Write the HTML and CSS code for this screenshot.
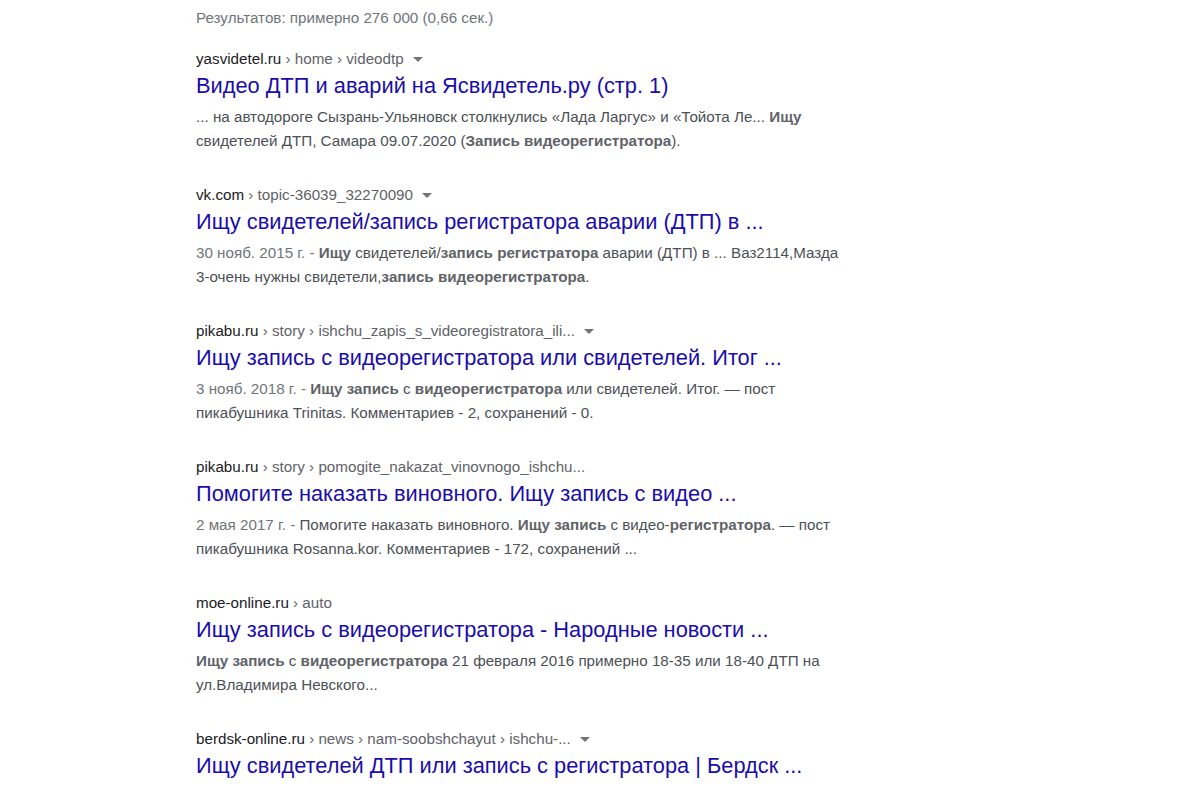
FILE: index.html
```html
<!DOCTYPE html>
<html lang="ru">
<head>
    <meta charset="UTF-8">
    <title>Ищу запись с видеорегистратора - Поиск</title>
    <link rel="stylesheet" href="styles.css">
</head>
<body>
    <div class="results">
        <div class="stats">Результатов: примерно 276 000 (0,66 сек.)</div>

        <div class="result">
            <div class="cite">yasvidetel.ru<span class="path"> › home › videodtp</span><span class="arrow"></span></div>
            <a class="title" href="#">Видео ДТП и аварий на Ясвидетель.ру (стр. 1)</a>
            <div class="snippet">... на автодороге Сызрань-Ульяновск столкнулись «Лада Ларгус» и «Тойота Ле... <b>Ищу</b> свидетелей ДТП, Самара 09.07.2020 (<b>Запись видеорегистратора</b>).</div>
        </div>

        <div class="result">
            <div class="cite">vk.com<span class="path"> › topic-36039_32270090</span><span class="arrow"></span></div>
            <a class="title" href="#">Ищу свидетелей/запись регистратора аварии (ДТП) в ...</a>
            <div class="snippet"><span class="date">30 нояб. 2015 г. - </span><b>Ищу</b> свидетелей/<b>запись регистратора</b> аварии (ДТП) в ... Ваз2114,Мазда 3-очень нужны свидетели,<b>запись видеорегистратора</b>.</div>
        </div>

        <div class="result">
            <div class="cite">pikabu.ru<span class="path"> › story › ishchu_zapis_s_videoregistratora_ili...</span><span class="arrow"></span></div>
            <a class="title" href="#">Ищу запись с видеорегистратора или свидетелей. Итог ...</a>
            <div class="snippet"><span class="date">3 нояб. 2018 г. - </span><b>Ищу запись</b> с <b>видеорегистратора</b> или свидетелей. Итог. — пост пикабушника Trinitas. Комментариев - 2, сохранений - 0.</div>
        </div>

        <div class="result">
            <div class="cite">pikabu.ru<span class="path"> › story › pomogite_nakazat_vinovnogo_ishchu...</span></div>
            <a class="title" href="#">Помогите наказать виновного. Ищу запись с видео ...</a>
            <div class="snippet"><span class="date">2 мая 2017 г. - </span>Помогите наказать виновного. <b>Ищу запись</b> с видео-<b>регистратора</b>. — пост пикабушника Rosanna.kor. Комментариев - 172, сохранений ...</div>
        </div>

        <div class="result">
            <div class="cite">moe-online.ru<span class="path"> › auto</span></div>
            <a class="title" href="#">Ищу запись с видеорегистратора - Народные новости ...</a>
            <div class="snippet"><b>Ищу запись</b> с <b>видеорегистратора</b> 21 февраля 2016 примерно 18-35 или 18-40 ДТП на ул.Владимира Невского...</div>
        </div>

        <div class="result">
            <div class="cite">berdsk-online.ru<span class="path"> › news › nam-soobshchayut › ishchu-...</span><span class="arrow"></span></div>
            <a class="title" href="#">Ищу свидетелей ДТП или запись с регистратора | Бердск ...</a>
        </div>
    </div>
</body>
</html>
```

FILE: styles.css
```css
body {
    margin: 0;
    background-color: #ffffff;
    font-family: "Liberation Sans", Arial, sans-serif;
    color: #4d5156;
}

.results {
    width: 652px;
    padding: 8px 0 0 196px;
}

.stats {
    font-size: 15.2px;
    line-height: 20px;
    color: #70757a;
    margin-bottom: 21px;
}

.result {
    margin-bottom: 32px;
}

.cite {
    font-size: 15.2px;
    line-height: 20px;
    color: #202124;
    white-space: nowrap;
}

.cite .path {
    color: #5f6368;
}

.arrow {
    display: inline-block;
    width: 0;
    height: 0;
    margin-left: 9px;
    vertical-align: middle;
    border-left: 5px solid transparent;
    border-right: 5px solid transparent;
    border-top: 5px solid #70757a;
}

.title {
    display: block;
    margin-top: 4px;
    font-size: 21.8px;
    line-height: 26px;
    color: #1a0dab;
    text-decoration: none;
}

.snippet {
    margin-top: 6px;
    font-size: 15.2px;
    line-height: 24px;
}

.snippet b {
    color: #5f6368;
}

.date {
    color: #70757a;
}
```
